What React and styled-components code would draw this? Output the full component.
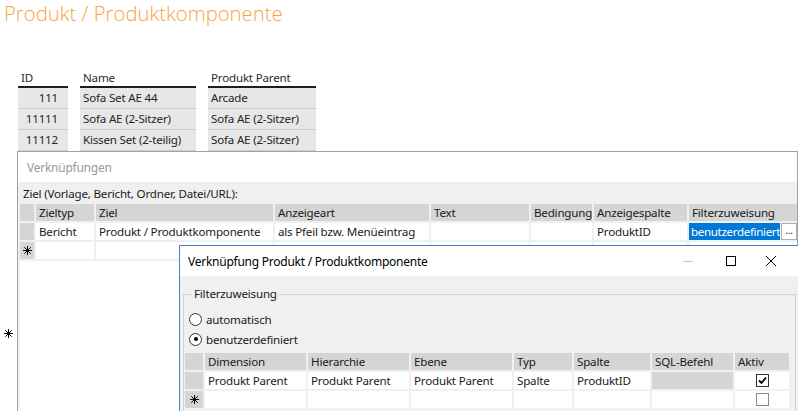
import React from 'react'
import styled, { createGlobalStyle } from 'styled-components'

const GlobalStyle = createGlobalStyle`
    html, body {
        margin: 0;
        padding: 0;
        background: #ffffff;
    }
    body {
        font-family: "Noto Sans", "Open Sans", sans-serif;
        font-size: 11.6px;
        letter-spacing: -0.2px;
        color: #1a1a1a;
    }
`

const Page = styled.div`
    position: relative;
    width: 798px;
    height: 411px;
    overflow: hidden;
    background: #ffffff;
`

const PageTitle = styled.h1`
    margin: 0;
    padding-left: 4px;
    font-family: "Open Sans", "Noto Sans", sans-serif;
    font-weight: 300;
    font-size: 20.3px;
    letter-spacing: 0;
    line-height: 26px;
    color: #f6a543;
`

const ProductTable = styled.div`
    display: grid;
    grid-template-columns: 50px 116px 108px;
    column-gap: 12px;
    margin: 43px 0 0 18px;
`

const HeadCell = styled.div`
    height: 17px;
    line-height: 17px;
    padding-left: 3px;
    border-bottom: 2px solid #1e1e1e;
    color: #2a2a2a;
`

const Cell = styled.div`
    height: 20px;
    line-height: 20px;
    padding: 0 ${p => (p.$right ? '10px' : '3px')} 0 3px;
    text-align: ${p => (p.$right ? 'right' : 'left')};
    background: #e7e7e7;
    border-bottom: 1px solid #cdcdcd;
    color: #2a2418;
    white-space: nowrap;
`

const StrayMarker = styled.div`
    margin: 175px 0 0 4px;
    height: 9px;
`

const Window = styled.section`
    position: absolute;
    left: ${p => p.$left}px;
    top: ${p => p.$top}px;
    width: ${p => p.$width}px;
    height: ${p => p.$height}px;
    border: 1px solid ${p => (p.$active ? '#3c84cc' : '#a3a3a3')};
    background: #f0f0f0;
    display: flex;
    flex-direction: column;
    box-sizing: border-box;
`

const TitleBar = styled.header`
    height: 30px;
    flex: none;
    display: flex;
    align-items: center;
    background: #ffffff;
    padding-left: ${p => p.$pad}px;
    color: ${p => (p.$active ? '#000000' : '#9a9a9a')};
    font-size: 12px;
    letter-spacing: -0.25px;
`

const TitleText = styled.span`
    flex: 1;
`

const Controls = styled.div`
    display: flex;
    height: 30px;
    margin-right: 17px;
`

const ControlButton = styled.div`
    width: ${p => p.$w}px;
    display: flex;
    align-items: center;
    justify-content: center;
`

const LinkBody = styled.div`
    flex: 1;
    display: flex;
    flex-direction: column;
    padding: 0 0 0 2px;
`

const FieldLabel = styled.div`
    height: 22px;
    line-height: 24px;
    padding-left: 3px;
`

const GridPane = styled.div`
    flex: 1;
    background: #ffffff;
`

const DataGrid = styled.div`
    display: grid;
    grid-template-columns: ${p => p.$cols};
    grid-auto-rows: 17px;
    gap: 2px;
    padding-bottom: 2px;
    background: #f0f0f0;
`

const GridCell = styled.div`
    display: flex;
    align-items: center;
    justify-content: ${p => (p.$center ? 'center' : 'flex-start')};
    padding-left: ${p => (p.$center ? 0 : 3)}px;
    background: ${p => (p.$head || p.$disabled ? '#d5d5d5' : '#ffffff')};
    color: #1a1a1a;
    white-space: nowrap;
    overflow: hidden;
`

const RowHeader = styled.div`
    display: flex;
    align-items: center;
    justify-content: center;
    background: #d5d5d5;
`

const SelectedCell = styled.div`
    display: flex;
    align-items: stretch;
    background: #ffffff;
    min-width: 0;
`

const SelectedValue = styled.span`
    flex: 1;
    min-width: 0;
    overflow: hidden;
    white-space: nowrap;
    background: #0078d7;
    color: #ffffff;
    padding-left: 2px;
    letter-spacing: -0.35px;
    line-height: 17px;
`

const EllipsisButton = styled.span`
    flex: none;
    width: 14px;
    border: 1px solid #adadad;
    background: #ffffff;
    color: #333;
    font-size: 10px;
    line-height: 12px;
    text-align: center;
    margin-left: 1px;
`

const DialogBody = styled.div`
    flex: 1;
    padding: 11px 12px 0 3px;
`

const GroupBox = styled.fieldset`
    margin: 0;
    padding: 0 6px 0 1px;
    border: 1px solid #d2d2d2;
    height: 200px;
`

const GroupLegend = styled.legend`
    margin-left: 7px;
    padding: 0 2px;
    line-height: 14px;
    color: #1a1a1a;
`

const RadioList = styled.div`
    display: flex;
    flex-direction: column;
    margin: 8px 0 4px 4px;
`

const RadioRow = styled.label`
    display: flex;
    align-items: center;
    height: 20px;
    gap: 4px;
`

const RadioCircle = styled.span`
    width: 11px;
    height: 11px;
    border-radius: 50%;
    border: 1px solid #333333;
    background: #ffffff;
    display: flex;
    align-items: center;
    justify-content: center;
    &::after {
        content: '';
        width: 4px;
        height: 4px;
        border-radius: 50%;
        background: ${p => (p.$checked ? '#000000' : 'transparent')};
    }
`

const CheckBox = styled.span`
    width: 11px;
    height: 11px;
    border: 1px solid ${p => (p.$checked ? '#333333' : '#8a8a8a')};
    background: #ffffff;
    display: flex;
    align-items: center;
    justify-content: center;
`

const NewRowMark = () => (
    <svg width="9" height="9" viewBox="0 0 9 9">
        <g stroke="#000" strokeWidth="1">
            <line x1="4.5" y1="0" x2="4.5" y2="9" />
            <line x1="0" y1="4.5" x2="9" y2="4.5" />
            <line x1="1.3" y1="1.3" x2="7.7" y2="7.7" />
            <line x1="7.7" y1="1.3" x2="1.3" y2="7.7" />
        </g>
    </svg>
)

const products = [
    { id: '111', name: 'Sofa Set AE 44', parent: 'Arcade' },
    { id: '11111', name: 'Sofa AE (2-Sitzer)', parent: 'Sofa AE (2-Sitzer)' },
    { id: '11112', name: 'Kissen Set (2-teilig)', parent: 'Sofa AE (2-Sitzer)' },
]

const linkColumns = ['Zieltyp', 'Ziel', 'Anzeigeart', 'Text', 'Bedingung', 'Anzeigespalte', 'Filterzuweisung']
const filterColumns = ['Dimension', 'Hierarchie', 'Ebene', 'Typ', 'Spalte', 'SQL-Befehl', 'Aktiv']

export default function App() {
    return (
        <Page>
            <GlobalStyle />
            <PageTitle>Produkt / Produktkomponente</PageTitle>

            <ProductTable>
                <HeadCell>ID</HeadCell>
                <HeadCell>Name</HeadCell>
                <HeadCell>Produkt Parent</HeadCell>
                {products.map(p => (
                    <React.Fragment key={p.id}>
                        <Cell $right>{p.id}</Cell>
                        <Cell>{p.name}</Cell>
                        <Cell>{p.parent}</Cell>
                    </React.Fragment>
                ))}
            </ProductTable>
            <StrayMarker><NewRowMark /></StrayMarker>

            <Window $left={17} $top={151} $width={781} $height={300}>
                <TitleBar $pad={9}>
                    <TitleText>Verknüpfungen</TitleText>
                </TitleBar>
                <LinkBody>
                    <FieldLabel>Ziel (Vorlage, Bericht, Ordner, Datei/URL):</FieldLabel>
                    <GridPane>
                        <DataGrid $cols="14px 58px 177px 154px 98px 61px 93px 1fr">
                            <RowHeader />
                            {linkColumns.map(c => <GridCell key={c} $head>{c}</GridCell>)}

                            <RowHeader />
                            <GridCell>Bericht</GridCell>
                            <GridCell>Produkt / Produktkomponente</GridCell>
                            <GridCell>als Pfeil bzw. Menüeintrag</GridCell>
                            <GridCell />
                            <GridCell />
                            <GridCell>ProduktID</GridCell>
                            <SelectedCell>
                                <SelectedValue>benutzerdefiniert</SelectedValue>
                                <EllipsisButton>...</EllipsisButton>
                            </SelectedCell>

                            <RowHeader><NewRowMark /></RowHeader>
                            {linkColumns.map(c => <GridCell key={c} />)}
                        </DataGrid>
                    </GridPane>
                </LinkBody>
            </Window>

            <Window $left={179} $top={245} $width={630} $height={200} $active>
                <TitleBar $pad={8} $active>
                    <TitleText>Verknüpfung Produkt / Produktkomponente</TitleText>
                    <Controls>
                        <ControlButton $w={46}>
                            <svg width="10" height="10" viewBox="0 0 10 10">
                                <line x1="0" y1="5.5" x2="10" y2="5.5" stroke="#c8c8c8" strokeWidth="1" />
                            </svg>
                        </ControlButton>
                        <ControlButton $w={40}>
                            <svg width="10" height="10" viewBox="0 0 10 10">
                                <rect x="0.5" y="0.5" width="9" height="9" fill="none" stroke="#000" strokeWidth="1" />
                            </svg>
                        </ControlButton>
                        <ControlButton $w={40}>
                            <svg width="10" height="10" viewBox="0 0 10 10">
                                <path d="M0 0 L10 10 M10 0 L0 10" stroke="#000" strokeWidth="1" />
                            </svg>
                        </ControlButton>
                    </Controls>
                </TitleBar>
                <DialogBody>
                    <GroupBox>
                        <GroupLegend>Filterzuweisung</GroupLegend>
                        <RadioList>
                            <RadioRow><RadioCircle />automatisch</RadioRow>
                            <RadioRow><RadioCircle $checked />benutzerdefiniert</RadioRow>
                        </RadioList>
                        <DataGrid $cols="18px 101px 101px 101px 58px 76px 81px 54px">
                            <RowHeader />
                            {filterColumns.map(c => <GridCell key={c} $head>{c}</GridCell>)}

                            <RowHeader />
                            <GridCell>Produkt Parent</GridCell>
                            <GridCell>Produkt Parent</GridCell>
                            <GridCell>Produkt Parent</GridCell>
                            <GridCell>Spalte</GridCell>
                            <GridCell>ProduktID</GridCell>
                            <GridCell $disabled />
                            <GridCell $center>
                                <CheckBox $checked>
                                    <svg width="9" height="9" viewBox="0 0 9 9">
                                        <path d="M1 4.5 L3.5 7 L8 1.5" fill="none" stroke="#000" strokeWidth="1.8" />
                                    </svg>
                                </CheckBox>
                            </GridCell>

                            <RowHeader><NewRowMark /></RowHeader>
                            {filterColumns.slice(0, 6).map(c => <GridCell key={c} />)}
                            <GridCell $center><CheckBox /></GridCell>
                        </DataGrid>
                    </GroupBox>
                </DialogBody>
            </Window>
        </Page>
    )
}
